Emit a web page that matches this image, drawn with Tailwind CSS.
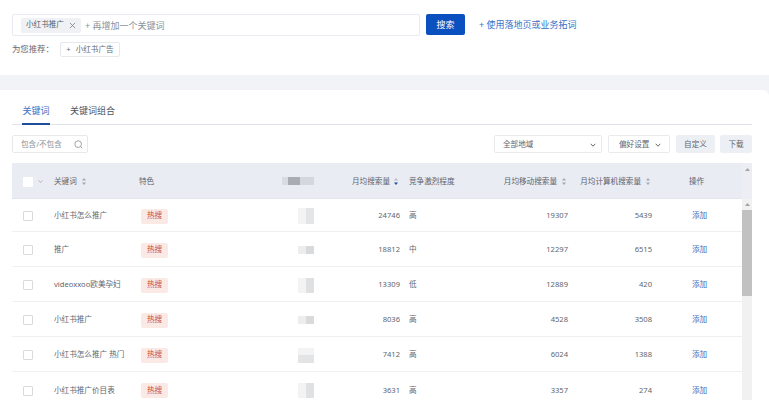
<!DOCTYPE html>
<html lang="zh"><head><meta charset="utf-8">
<script src="https://cdn.jsdelivr.net/npm/@tailwindcss/browser@4"></script>
</head>
<body class="bg-white">
<div class="h-[400px] w-[769px] overflow-hidden bg-[#f1f3f6] font-['Noto_Sans','Noto_Sans_CJK_SC',sans-serif] text-[7.6px] text-[#62666e]">
  <section class="h-[75px] bg-white px-3 pt-[14px]">
    <div class="flex items-start">
      <div class="flex h-[22px] w-[408px] items-center rounded-[2px] border border-[#e8ebf0] pl-2">
        <span class="flex h-[15px] w-[60px] items-center gap-[5px] rounded-[2px] bg-[#eff1f4] pl-[5px] leading-none text-[#555a63]">小红书推广
          <svg class="h-[7px] w-[7px]" viewBox="0 0 8 8" fill="none" stroke="#6b7078" stroke-width=".8"><path d="M1 1l6 6M7 1L1 7"/></svg>
        </span>
        <span class="ml-[4px] text-[9px] leading-none text-[#8d9198]">+ 再增加一个关键词</span>
      </div>
      <button class="ml-[6px] h-[21px] w-[39px] rounded-[2px] bg-[#0b50bf] text-[9px] leading-none text-white">搜索</button>
      <span class="ml-[14px] mt-[5px] text-[9px] leading-[11px] text-[#3a70c4]">+ 使用落地页或业务拓词</span>
    </div>
    <div class="mt-[6px] flex items-center">
      <span class="w-[48px] text-[8.4px] leading-none whitespace-nowrap text-[#666a72]">为您推荐：</span>
      <span class="flex h-[15px] w-[60px] items-center justify-center gap-[5px] rounded-[2px] border border-[#e6e8ec] leading-none text-[#666a72]">+ <span>小红书广告</span></span>
    </div>
  </section>
  <main class="mt-[15px] h-[310px] rounded-tr-[6px] bg-white pl-3 pr-[17px]">
    <nav class="flex h-[35px] border-b border-[#dfe2e8] pl-[10px] text-[9px]">
      <span class="flex h-[35px] w-[28px] items-center justify-center border-b-2 border-[#1f4f9c] pt-[9px] text-[#3a70c4]">关键词</span>
      <span class="ml-[20px] flex h-[34px] items-center pt-[8px] text-[#50545c]">关键词组合</span>
    </nav>
    <div class="mt-[10px] flex h-[18px] items-stretch leading-none">
      <div class="flex w-[76px] items-center justify-between rounded-[2px] border border-[#e6e8ec] pl-2 pr-[4px] pt-[1px] text-[#8d9198]">包含/不包含
        <svg class="h-[9px] w-[9px]" viewBox="0 0 10 10" fill="none" stroke="#7d8188" stroke-width=".8"><circle cx="4.6" cy="4.6" r="3.7"/><path d="M7.3 7.3l1.9 1.9"/></svg>
      </div>
      <div class="ml-[406px] flex w-[108px] items-center justify-between rounded-[2px] border border-[#e8eaee] pl-2 pr-[5px] pt-[1px]">全部地域
        <svg class="h-[6px] w-[6px]" viewBox="0 0 6 6" fill="none" stroke="#555" stroke-width=".9"><path d="M.7 1.8L3 4.2l2.3-2.4"/></svg>
      </div>
      <div class="ml-[6px] flex w-[62px] items-center gap-[6px] rounded-[2px] border border-[#e8eaee] pl-[10px] pt-[1px]">偏好设置
        <svg class="h-[6px] w-[6px]" viewBox="0 0 6 6" fill="none" stroke="#555" stroke-width=".9"><path d="M.7 1.8L3 4.2l2.3-2.4"/></svg>
      </div>
      <div class="ml-[6px] flex w-[39px] items-center justify-center rounded-[2px] bg-[#eceff4] pt-[1px]">自定义</div>
      <div class="ml-[5px] flex w-[32px] items-center justify-center rounded-[2px] bg-[#eceff4] pt-[1px]">下载</div>
    </div>
    <div class="relative mt-[10px] h-[240px] overflow-hidden">
      <div class="grid h-[36px] grid-cols-[42px_85px_141px_60px_60px_103px_65px_84px_90px] items-center border-b border-[#e2e5ec] bg-[#e9ecf3] pt-[2px] text-[#5f636b]">
        <span class="flex items-center gap-[5px] pl-[11px]"><i class="block h-[10px] w-[10px] rounded-[1px] bg-white"></i><svg class="h-[5px] w-[5px]" viewBox="0 0 6 6" fill="none" stroke="#999" stroke-width=".8"><path d="M.7 1.8L3 4.2l2.3-2.4"/></svg></span>
        <span class="flex items-center gap-[5px]">关键词 <svg class="h-[7px] w-[4px]" viewBox="0 0 4 7" fill="#a5a9b1"><path d="M2 0l2 2.6H0zM2 7L0 4.4h4z"/></svg></span>
        <span>特色</span>
        <span class="ml-[2px] flex h-[8px] w-[32px] -translate-y-[1px]"><i class="w-[6px] bg-[#d8dbe1]"></i><i class="w-[12px] bg-[#a9acb3]"></i><i class="w-[14px] bg-[#d4d7de]"></i></span>
        <span class="flex items-center justify-end gap-[4px] pr-[2px] whitespace-nowrap">月均搜索量 <svg class="h-[7px] w-[4px]" viewBox="0 0 4 7"><path fill="#b5b9c1" d="M2 0l2 2.6H0z"/><path fill="#1f4f9c" d="M2 7L0 4.4h4z"/></svg></span>
        <span class="pl-[9px]">竞争激烈程度</span>
        <span class="flex items-center justify-end gap-[5px] pr-[2px] whitespace-nowrap">月均移动搜索量 <svg class="h-[7px] w-[4px] shrink-0" viewBox="0 0 4 7" fill="#a5a9b1"><path d="M2 0l2 2.6H0zM2 7L0 4.4h4z"/></svg></span>
        <span class="flex items-center justify-end gap-[5px] pr-[2px] whitespace-nowrap">月均计算机搜索量 <svg class="h-[7px] w-[4px] shrink-0" viewBox="0 0 4 7" fill="#a5a9b1"><path d="M2 0l2 2.6H0zM2 7L0 4.4h4z"/></svg></span>
        <span class="pl-[37px]">操作</span>
      </div>
      <div class="grid h-[33px] grid-cols-[42px_85px_143px_58px_60px_103px_65px_84px_90px] items-center border-b border-[#eef0f4] pt-[2px]">
        <i class="ml-[11px] block h-[10px] w-[10px] rounded-[1px] border border-[#d8dade]"></i><span>小红书怎么推广</span><span class="ml-[2px] flex h-[15px] w-[27px] items-center justify-center rounded-[2px] bg-[#fbe9e6] text-[#c9503c]">热搜</span>
        <span class="ml-[16px] flex h-[16px] w-[16px]"><i class="w-[8px] bg-[#f3f3f4]"></i><i class="w-[8px] bg-[#e4e5e7]"></i></span>
        <span class="text-right">24746</span><span class="pl-[9px]">高</span><span class="text-right">19307</span><span class="text-right">5439</span><span class="pl-[40px] text-[#3a70c4]">添加</span>
      </div>
      <div class="grid h-[35px] grid-cols-[42px_85px_143px_58px_60px_103px_65px_84px_90px] items-center border-b border-[#eef0f4] pt-[2px]">
        <i class="ml-[11px] block h-[10px] w-[10px] rounded-[1px] border border-[#d8dade]"></i><span>推广</span><span class="ml-[2px] flex h-[15px] w-[27px] items-center justify-center rounded-[2px] bg-[#fbe9e6] text-[#c9503c]">热搜</span>
        <span class="ml-[16px] flex h-[8px] w-[16px]"><i class="w-[8px] bg-[#eceded]"></i><i class="w-[8px] bg-[#d9dadc]"></i></span>
        <span class="text-right">18812</span><span class="pl-[9px]">中</span><span class="text-right">12297</span><span class="text-right">6515</span><span class="pl-[40px] text-[#3a70c4]">添加</span>
      </div>
      <div class="grid h-[35px] grid-cols-[42px_85px_143px_58px_60px_103px_65px_84px_90px] items-center border-b border-[#eef0f4] pt-[2px]">
        <i class="ml-[11px] block h-[10px] w-[10px] rounded-[1px] border border-[#d8dade]"></i><span class="whitespace-nowrap">videoxxoo欧美孕妇</span><span class="ml-[2px] flex h-[15px] w-[27px] items-center justify-center rounded-[2px] bg-[#fbe9e6] text-[#c9503c]">热搜</span>
        <span class="ml-[16px] flex h-[15px] w-[16px]"><i class="w-[8px] bg-[#f3f3f4]"></i><i class="w-[8px] bg-[#dfe0e2]"></i></span>
        <span class="text-right">13309</span><span class="pl-[9px]">低</span><span class="text-right">12889</span><span class="text-right">420</span><span class="pl-[40px] text-[#3a70c4]">添加</span>
      </div>
      <div class="grid h-[35px] grid-cols-[42px_85px_143px_58px_60px_103px_65px_84px_90px] items-center border-b border-[#eef0f4] pt-[2px]">
        <i class="ml-[11px] block h-[10px] w-[10px] rounded-[1px] border border-[#d8dade]"></i><span>小红书推广</span><span class="ml-[2px] flex h-[15px] w-[27px] items-center justify-center rounded-[2px] bg-[#fbe9e6] text-[#c9503c]">热搜</span>
        <span class="ml-[16px] flex h-[8px] w-[16px]"><i class="w-[8px] bg-[#eceded]"></i><i class="w-[8px] bg-[#d9dadc]"></i></span>
        <span class="text-right">8036</span><span class="pl-[9px]">高</span><span class="text-right">4528</span><span class="text-right">3508</span><span class="pl-[40px] text-[#3a70c4]">添加</span>
      </div>
      <div class="grid h-[35px] grid-cols-[42px_85px_143px_58px_60px_103px_65px_84px_90px] items-center border-b border-[#eef0f4] pt-[2px]">
        <i class="ml-[11px] block h-[10px] w-[10px] rounded-[1px] border border-[#d8dade]"></i><span class="whitespace-nowrap">小红书怎么推广 热门</span><span class="ml-[2px] flex h-[15px] w-[27px] items-center justify-center rounded-[2px] bg-[#fbe9e6] text-[#c9503c]">热搜</span>
        <span class="ml-[16px] flex h-[15px] w-[16px] flex-col"><i class="h-[7px] bg-[#f3f3f4]"></i><i class="h-[8px] bg-[#e3e4e6]"></i></span>
        <span class="text-right">7412</span><span class="pl-[9px]">高</span><span class="text-right">6024</span><span class="text-right">1388</span><span class="pl-[40px] text-[#3a70c4]">添加</span>
      </div>
      <div class="grid h-[35px] grid-cols-[42px_85px_143px_58px_60px_103px_65px_84px_90px] items-center pt-[2px]">
        <i class="ml-[11px] block h-[10px] w-[10px] rounded-[1px] border border-[#d8dade]"></i><span class="whitespace-nowrap">小红书推广价目表</span><span class="ml-[2px] flex h-[15px] w-[27px] items-center justify-center rounded-[2px] bg-[#fbe9e6] text-[#c9503c]">热搜</span>
        <span class="ml-[16px] flex h-[15px] w-[16px]"><i class="w-[8px] bg-[#f3f3f4]"></i><i class="w-[8px] bg-[#e0e1e3]"></i></span>
        <span class="text-right">3631</span><span class="pl-[9px]">高</span><span class="text-right">3357</span><span class="text-right">274</span><span class="pl-[40px] text-[#3a70c4]">添加</span>
      </div>
      <!-- scrollbar over the table's right edge -->
      <div class="absolute top-0 right-0 flex h-full w-[10px] flex-col items-center bg-[#f1f1f1]">
        <div class="flex h-[36px] w-full justify-center bg-[#eceef3] pt-[5px]"><svg class="h-[3px] w-[5px]" viewBox="0 0 5 3" fill="#a3a3a3"><path d="M2.5 0L5 3H0z"/></svg></div>
        <svg class="mt-[4px] h-[3px] w-[5px]" viewBox="0 0 5 3" fill="#a3a3a3"><path d="M2.5 0L5 3H0z"/></svg>
        <div class="mt-[4px] h-[86px] w-full bg-[#c1c1c1]"></div>
      </div>
    </div>
  </main>
</div>
</body></html>
